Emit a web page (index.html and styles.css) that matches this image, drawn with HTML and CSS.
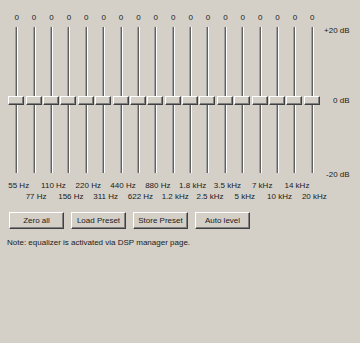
FILE: index.html
```html
<!DOCTYPE html>
<html lang="en">
<head>
  <meta charset="UTF-8">
  <title>Equalizer</title>
  <link rel="stylesheet" href="styles.css">
</head>
<body>

  <div class="eq-panel">
    <div class="eq-top">
      <div class="bands">
        <div class="band"><span class="val">0</span><div class="slot"><div class="track"></div><div class="thumb"></div></div></div>
        <div class="band"><span class="val">0</span><div class="slot"><div class="track"></div><div class="thumb"></div></div></div>
        <div class="band"><span class="val">0</span><div class="slot"><div class="track"></div><div class="thumb"></div></div></div>
        <div class="band"><span class="val">0</span><div class="slot"><div class="track"></div><div class="thumb"></div></div></div>
        <div class="band"><span class="val">0</span><div class="slot"><div class="track"></div><div class="thumb"></div></div></div>
        <div class="band"><span class="val">0</span><div class="slot"><div class="track"></div><div class="thumb"></div></div></div>
        <div class="band"><span class="val">0</span><div class="slot"><div class="track"></div><div class="thumb"></div></div></div>
        <div class="band"><span class="val">0</span><div class="slot"><div class="track"></div><div class="thumb"></div></div></div>
        <div class="band"><span class="val">0</span><div class="slot"><div class="track"></div><div class="thumb"></div></div></div>
        <div class="band"><span class="val">0</span><div class="slot"><div class="track"></div><div class="thumb"></div></div></div>
        <div class="band"><span class="val">0</span><div class="slot"><div class="track"></div><div class="thumb"></div></div></div>
        <div class="band"><span class="val">0</span><div class="slot"><div class="track"></div><div class="thumb"></div></div></div>
        <div class="band"><span class="val">0</span><div class="slot"><div class="track"></div><div class="thumb"></div></div></div>
        <div class="band"><span class="val">0</span><div class="slot"><div class="track"></div><div class="thumb"></div></div></div>
        <div class="band"><span class="val">0</span><div class="slot"><div class="track"></div><div class="thumb"></div></div></div>
        <div class="band"><span class="val">0</span><div class="slot"><div class="track"></div><div class="thumb"></div></div></div>
        <div class="band"><span class="val">0</span><div class="slot"><div class="track"></div><div class="thumb"></div></div></div>
        <div class="band"><span class="val">0</span><div class="slot"><div class="track"></div><div class="thumb"></div></div></div>
      </div>
      <div class="scale">
        <span class="db-top">+20 dB</span>
        <span class="db-mid">0 dB</span>
        <span class="db-bot">-20 dB</span>
      </div>
    </div>

    <div class="freqs odd-row">
      <span class="f c1">55 Hz</span>
      <span class="f c3">110 Hz</span>
      <span class="f c5">220 Hz</span>
      <span class="f c7">440 Hz</span>
      <span class="f c9">880 Hz</span>
      <span class="f c11">1.8 kHz</span>
      <span class="f c13">3.5 kHz</span>
      <span class="f c15">7 kHz</span>
      <span class="f c17">14 kHz</span>
    </div>
    <div class="freqs">
      <span class="f c2">77 Hz</span>
      <span class="f c4">156 Hz</span>
      <span class="f c6">311 Hz</span>
      <span class="f c8">622 Hz</span>
      <span class="f c10">1.2 kHz</span>
      <span class="f c12">2.5 kHz</span>
      <span class="f c14">5 kHz</span>
      <span class="f c16">10 kHz</span>
      <span class="f c18">20 kHz</span>
    </div>

    <div class="button-row">
      <button type="button">Zero all</button>
      <button type="button">Load Preset</button>
      <button type="button">Store Preset</button>
      <button type="button">Auto level</button>
    </div>

    <p class="note">Note: equalizer is activated via DSP manager page.</p>
  </div>

</body>
</html>
```

FILE: styles.css
```css
body {
  font-family: "Liberation Sans", Arial, sans-serif;
  font-size: 8px;
  background-color: #d4d0c8;
  color: #1a1a1a;
  margin: 0;
  padding: 0;
}

.eq-panel {
  padding: 12px 0 0 8px;
}

.eq-top {
  display: flex;
}

.bands {
  display: grid;
  grid-template-columns: repeat(18, 17.4px);
}

.band {
  display: flex;
  flex-direction: column;
  align-items: center;
}

.val {
  height: 12px;
  line-height: 12px;
}

.slot {
  position: relative;
  width: 17px;
  height: 146px;
  margin-top: 3px;
  display: flex;
  justify-content: center;
}

.track {
  width: 1px;
  height: 100%;
  background-color: #606060;
  border-left: 1px solid #a0a0a0;
  border-right: 1px solid #fff;
}

.thumb {
  position: absolute;
  left: 0;
  top: 69px;
  width: 14px;
  height: 7px;
  background-color: #d4d0c8;
  border-top: 1px solid #fff;
  border-left: 1px solid #fff;
  border-right: 1px solid #404040;
  border-bottom: 1px solid #404040;
  box-shadow: inset -1px -1px 0 #808080;
}

.scale {
  position: relative;
  width: 40px;
}

.scale span {
  position: absolute;
  white-space: nowrap;
}

.db-top {
  left: 3px;
  top: 14px;
}

.db-mid {
  left: 12px;
  top: 84px;
}

.db-bot {
  left: 5px;
  top: 158px;
}

.freqs {
  display: grid;
  grid-template-columns: repeat(18, 17.4px);
  height: 11px;
  line-height: 11px;
}

.odd-row {
  margin-top: 7px;
}

.f {
  display: flex;
  justify-content: center;
  white-space: nowrap;
  position: relative;
  left: 2px;
}

.c1 { grid-column: 1; }
.c2 { grid-column: 2; }
.c3 { grid-column: 3; }
.c4 { grid-column: 4; }
.c5 { grid-column: 5; }
.c6 { grid-column: 6; }
.c7 { grid-column: 7; }
.c8 { grid-column: 8; }
.c9 { grid-column: 9; }
.c10 { grid-column: 10; }
.c11 { grid-column: 11; }
.c12 { grid-column: 12; }
.c13 { grid-column: 13; }
.c14 { grid-column: 14; }
.c15 { grid-column: 15; }
.c16 { grid-column: 16; }
.c17 { grid-column: 17; }
.c18 { grid-column: 18; }

.button-row {
  display: flex;
  gap: 7px;
  margin-top: 10px;
  padding-left: 1px;
}

.button-row button {
  width: 55px;
  height: 17px;
  padding: 0;
  font-family: inherit;
  font-size: 8px;
  color: #1a1a1a;
  background-color: #d4d0c8;
  border-top: 1px solid #fff;
  border-left: 1px solid #fff;
  border-right: 1px solid #404040;
  border-bottom: 1px solid #404040;
  box-shadow: inset -1px -1px 0 #808080;
  border-radius: 0;
}

.note {
  margin: 9px 0 0 -1px;
}
```
